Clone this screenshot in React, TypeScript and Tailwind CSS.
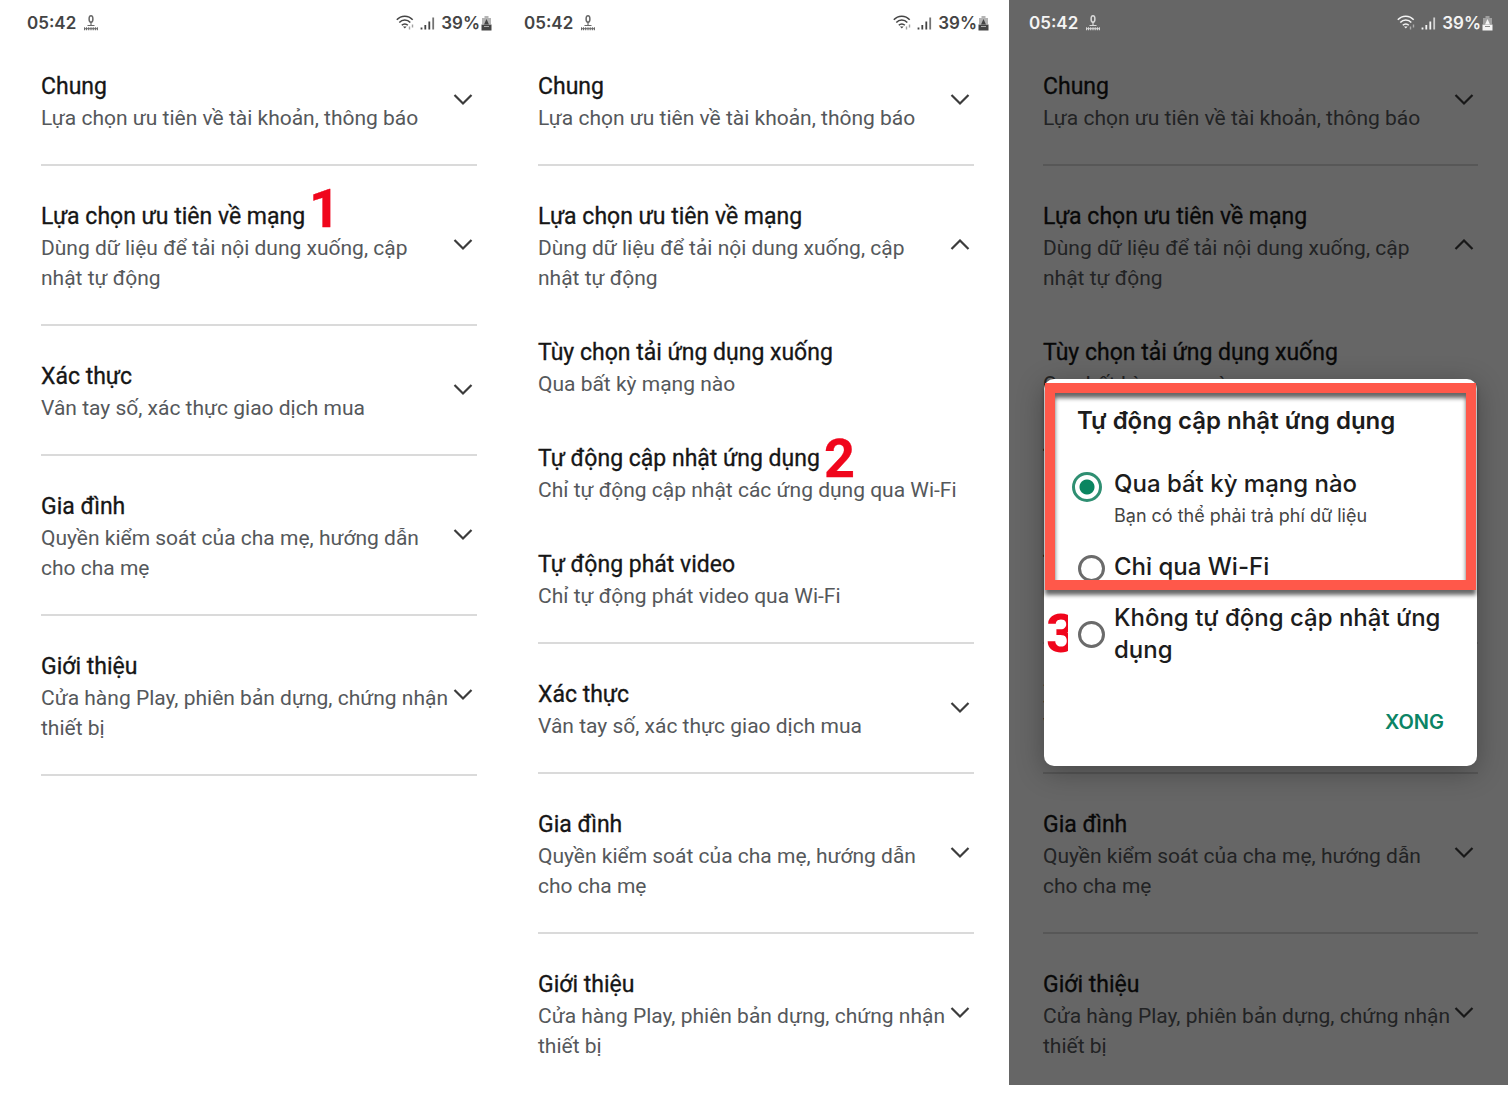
import { useState } from 'react'
import clsx from 'clsx'

interface SubSetting {
  title: string
  detail: string
}

interface Section extends SubSetting {
  children?: SubSetting[]
}

interface Step {
  on: string
  label: string
  raised?: boolean
}

const sections: Section[] = [
  { title: 'Chung', detail: 'Lựa chọn ưu tiên về tài khoản, thông báo' },
  {
    title: 'Lựa chọn ưu tiên về mạng',
    detail: 'Dùng dữ liệu để tải nội dung xuống, cập nhật tự động',
    children: [
      { title: 'Tùy chọn tải ứng dụng xuống', detail: 'Qua bất kỳ mạng nào' },
      { title: 'Tự động cập nhật ứng dụng', detail: 'Chỉ tự động cập nhật các ứng dụng qua Wi-Fi' },
      { title: 'Tự động phát video', detail: 'Chỉ tự động phát video qua Wi-Fi' },
    ],
  },
  { title: 'Xác thực', detail: 'Vân tay số, xác thực giao dịch mua' },
  { title: 'Gia đình', detail: 'Quyền kiểm soát của cha mẹ, hướng dẫn cho cha mẹ' },
  { title: 'Giới thiệu', detail: 'Cửa hàng Play, phiên bản dựng, chứng nhận thiết bị' },
]

const NETWORK = 'Lựa chọn ưu tiên về mạng'
const AUTO_UPDATE = 'Tự động cập nhật ứng dụng'

function Chevron({ open }: { open: boolean }) {
  return (
    <svg className="w-5 h-3 mr-1 mb-1 shrink-0 text-[#3c3c3c]" viewBox="0 0 20 12" fill="none" stroke="currentColor" strokeWidth={2.2}>
      <path d={open ? 'M1.5 10 10 1.5l8.5 8.5' : 'M1.5 1 10 9.5 18.5 1'} />
    </svg>
  )
}

function StatusBar({ light }: { light?: boolean }) {
  return (
    <div
      className={clsx(
        'relative z-10 -ml-[14px] -mr-[15px] flex h-9 items-center justify-between pt-[9px]',
        light ? 'text-[#f4f4f4]' : 'text-[#444]',
      )}
    >
      <div className="flex items-center gap-2">
        <span className="font-[Inter,sans-serif] text-[17px] leading-5 font-semibold">05:42</span>
        <svg className="w-[14px] h-4 opacity-80" viewBox="0 0 14 16" fill="none" stroke="currentColor">
          <ellipse cx="7" cy="4" rx="1.9" ry="3.2" strokeWidth={1.5} />
          <path d="M7 7v4M3.5 10.5h7" strokeWidth={1.2} />
          <path d="M.5 12.2v3M2.5 12.2v3M4.7 12.2v3M7 12.2v3M9.2 12.2v3M11.4 12.2v3M13.4 12.2v3" strokeWidth={1.1} />
          <path d="M0 13.7h14" />
        </svg>
      </div>
      <div className="flex items-center">
        <svg className="w-5 h-4 mr-1" viewBox="0 0 20 16" fill="none" stroke="currentColor" strokeWidth={1.5}>
          <path d="M.8 4.8C5-.1 12.5-.1 16.7 4.8M3.3 7.6c3-3.4 8-3.4 11 0M5.8 10.3c1.7-1.9 4.3-1.9 6 0" />
          <path d="M7 11.5h3.6l-1.8 2z" fill="currentColor" stroke="none" />
          <path d="M13.5 11.5v3M16.500 9.5v3" strokeWidth={1.4} opacity={0.5} />
        </svg>
        <svg className="w-[15px] h-4 mr-[6px]" viewBox="0 0 15 16" fill="none" stroke="currentColor" strokeWidth={1.8}>
          <path d="M1.5 12.5v2M5.3 10v4.5M9.3 6.5v8" />
          <path d="M13.2 2.5v12" opacity={0.75} />
        </svg>
        <span className="mr-px font-[Inter,sans-serif] text-[17px] leading-5 font-semibold">39%</span>
        <svg className="w-[11px] h-4" viewBox="0 0 11 16" fill="currentColor">
          <path d="M3.5 1h4v2H10v6H1V3h2.5z" opacity={0.4} />
          <path d="M5.5 4 8 9.5H3z" />
          <path d="M.5 9.5h10v6H.5z" />
          <path d="M3 11.5h5" stroke={light ? '#888' : '#aaa'} />
        </svg>
      </div>
    </div>
  )
}

interface SettingTextProps extends SubSetting {
  step?: Step
}

function SettingText({ title, detail, step }: SettingTextProps) {
  return (
    <span className="block text-left">
      <span className="relative inline-block align-top text-[23px] leading-8 text-[#161616] [-webkit-text-stroke:0.3px]">
        {title}
        {step && (
          <span
            className={clsx(
              'absolute left-full ml-1 text-[54px] leading-[48px] font-bold text-[#f0061c]',
              step.raised ? 'bottom-0' : '-bottom-2',
            )}
          >
            {step.label}
          </span>
        )}
      </span>
      <span className="block text-[21px] leading-[30px] text-[#55585b]">{detail}</span>
    </span>
  )
}

interface SettingsListProps {
  initialOpen?: string
  step?: Step
  lastLine?: boolean
}

function SettingsList({ initialOpen, step, lastLine }: SettingsListProps) {
  const [open, setOpen] = useState(initialOpen)

  return (
    <ul>
      {sections.map((section, i) => (
        <li
          key={section.title}
          className={clsx(
            'pt-[35px]',
            i === sections.length - 1 && !lastLine ? 'pb-6' : 'pb-[31px] border-b-2 border-[#dadada]',
          )}
        >
          <button
            type="button"
            aria-expanded={open === section.title}
            onClick={() => setOpen(open === section.title ? undefined : section.title)}
            className="flex w-full items-center justify-between"
          >
            <SettingText
              title={section.title}
              detail={section.detail}
              step={step?.on === section.title ? step : undefined}
            />
            <Chevron open={open === section.title} />
          </button>
          {open === section.title && section.children && (
            <div className="mt-11 flex flex-col gap-11">
              {section.children.map((child) => (
                <button key={child.title} type="button" className="block w-full whitespace-nowrap">
                  <SettingText {...child} step={step?.on === child.title ? step : undefined} />
                </button>
              ))}
            </div>
          )}
        </li>
      ))}
    </ul>
  )
}

const options = [
  { value: 'any', label: 'Qua bất kỳ mạng nào', hint: 'Bạn có thể phải trả phí dữ liệu' },
  { value: 'wifi', label: 'Chỉ qua Wi-Fi' },
  { value: 'never', label: 'Không tự động cập nhật ứng dụng' },
]

function UpdateDialog() {
  const [value, setValue] = useState('any')

  return (
    <div
      role="dialog"
      aria-labelledby="update-title"
      className="absolute top-[379px] left-[35px] right-[31px] z-20 rounded-[10px] bg-white pt-[26px] pb-8 font-[Inter,sans-serif] text-[#1c1c1c] shadow-[0_6px_28px_rgba(0,0,0,0.3)]"
    >
      <h2 id="update-title" className="pl-[33px] text-[24px] leading-8 font-semibold">
        Tự động cập nhật ứng dụng
      </h2>
      <div className="mt-[31px] flex flex-col gap-[19px] pl-7 pr-8">
        {options.map((option) => (
          <label key={option.value} className={clsx('flex', option.value === 'never' ? 'items-center' : 'items-start')}>
            <span className="flex w-[42px] shrink-0">
              <input
                type="radio"
                name="auto-update"
                checked={value === option.value}
                onChange={() => setValue(option.value)}
                className={clsx(
                  'appearance-none rounded-full',
                  option.value !== 'never' && 'mt-1',
                  value === option.value
                    ? 'size-[30px] border-[3px] border-[#2f8f72] bg-[radial-gradient(circle,#0a8560_0_7px,#fff_8px)]'
                    : 'ml-[6px] size-[27px] border-[3px] border-[#6b6b6b]',
                )}
              />
            </span>
            <span className="text-[24px] leading-8 font-medium">
              {option.label}
              {option.hint && <span className="block text-[18px] leading-8 font-normal text-[#444]">{option.hint}</span>}
            </span>
          </label>
        ))}
      </div>
      <div className="mt-11 flex justify-end pr-[33px]">
        <button type="button" className="text-[20px] leading-6 font-semibold text-[#0b8465]">
          XONG
        </button>
      </div>

      {/* Highlight frame and step number */}
      <div className="pointer-events-none absolute top-1 left-px right-px h-[207px] border-[10px] border-[#ff584a] drop-shadow-[0_5px_2px_rgba(0,0,0,0.6)]" />
      <span className="absolute top-[231px] left-[2px] w-[22px] overflow-hidden font-[Roboto,sans-serif] text-[54px] leading-[48px] font-bold text-[#f0061c]">
        3
      </span>
    </div>
  )
}

export default function App() {
  return (
    <main className="grid grid-cols-[497fr_512fr_501fr] bg-white font-[Roboto,sans-serif]">
      <section className="pl-[41px] pr-5">
        <StatusBar />
        <SettingsList step={{ on: NETWORK, label: '1', raised: true }} lastLine />
      </section>
      <section className="pl-[41px] pr-[35px]">
        <StatusBar />
        <SettingsList initialOpen={NETWORK} step={{ on: AUTO_UPDATE, label: '2' }} />
      </section>
      <section className="relative mr-[2px] pl-[34px] pr-[30px]">
        <StatusBar light />
        <SettingsList initialOpen={NETWORK} />
        <div className="absolute inset-0 bg-black/60" />
        <UpdateDialog />
      </section>
    </main>
  )
}
